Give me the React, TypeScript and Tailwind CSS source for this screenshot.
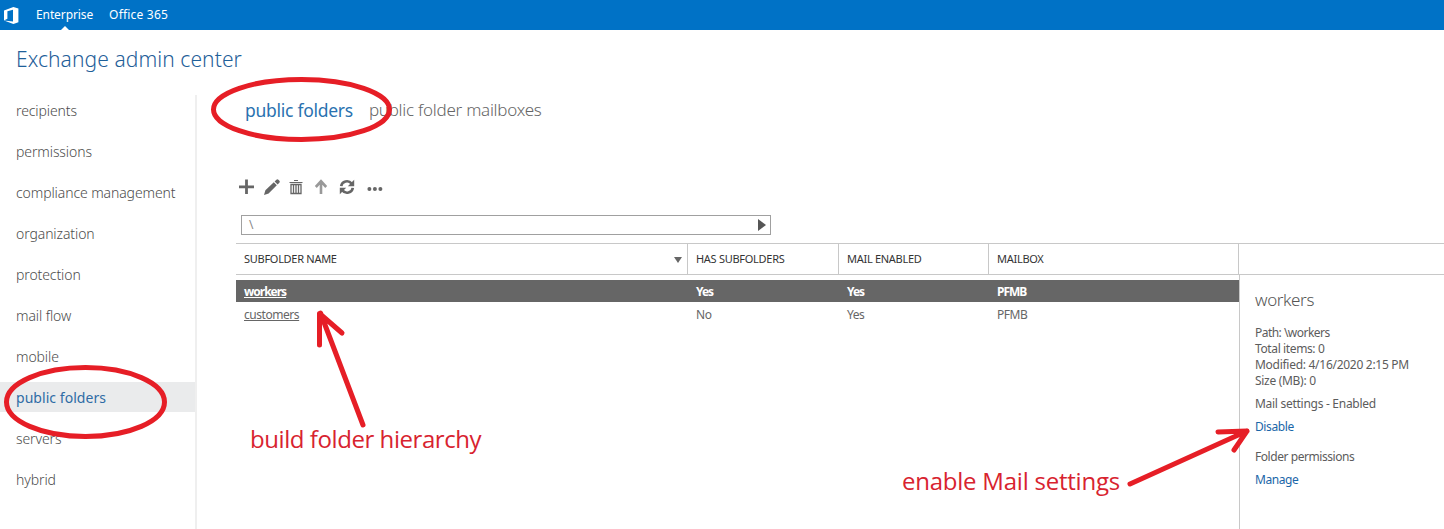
import React from "react";

const navItems = [
  "recipients",
  "permissions",
  "compliance management",
  "organization",
  "protection",
  "mail flow",
  "mobile",
  "public folders",
  "servers",
  "hybrid",
];

const rows = [
  { name: "workers", sub: "Yes", mail: "Yes", mailbox: "PFMB", selected: true },
  { name: "customers", sub: "No", mail: "Yes", mailbox: "PFMB", selected: false },
];

const columns = "grid grid-cols-[452px_151px_150px_1fr]";

function TopBar() {
  return (
    <header className="flex h-[30px] bg-[#0072c6] text-[12px] leading-[30px] text-white">
      <svg className="mt-[7px] ml-[4px] h-[17px] w-[15px]" viewBox="0 0 15 17" fill="#fff">
        <path fillRule="evenodd" d="M0 3.6 9.4 0 14.4 1.5V15.2L9.4 17 0 13.4 9 14.4V2.8L3.4 4.2V11.8L0 13.4Z" />
      </svg>
      <div className="ml-[17px] flex flex-col items-center">
        <span className="h-[26px] leading-[29px] tracking-[-0.1px]">Enterprise</span>
        <svg className="h-[4px] w-[8px]" viewBox="0 0 8 4" fill="#fff">
          <path d="M4 0 8 4H0Z" />
        </svg>
      </div>
      <span className="ml-[16px] leading-[29px] tracking-[0.2px]">Office 365</span>
    </header>
  );
}

function Sidebar() {
  return (
    <nav className="flex w-[197px] shrink-0 flex-col gap-[11px] border-r-2 border-[#efefef]">
      {navItems.map((item) => (
        <a
          key={item}
          className={
            item === "public folders"
              ? "h-[30px] bg-[#eaebec] pl-[16px] text-[14px] leading-[31px] tracking-[0.05px] text-[#2f6ba5]"
              : "h-[30px] pl-[16px] text-[14px] leading-[31px] font-light tracking-[-0.1px] text-[#4c4c4c]"
          }
        >
          {item}
        </a>
      ))}
    </nav>
  );
}

function Toolbar() {
  return (
    <div className="flex h-[20px] items-center text-[#666]">
      <svg className="h-[16px] w-[16px]" viewBox="0 0 16 16" fill="currentColor">
        <path d="M6.1 .5H8.9V6.4H15V9.2H8.9V15H6.1V9.2H0V6.4H6.1Z" />
      </svg>
      <svg className="ml-[9px] h-[16px] w-[16px]" viewBox="0 0 16 16" fill="currentColor">
        <path d="M0 16 1.4 11.2 9.8 3.2 12.8 6.2 4.6 14.4ZM10.6 2.4 12.4.7Q13.4-.2 14.4.7L15.4 1.8Q16.2 2.7 15.3 3.7L13.6 5.4Z" />
      </svg>
      <svg className="ml-[9px] h-[16px] w-[14px]" viewBox="0 0 14 16" fill="none" stroke="currentColor">
        <path d="M5 1.5H9M.5 3.5H13.5" />
        <path d="M2 5.5H12V14.5H2ZM4.5 6V14M7 6V14M9.5 6V14" strokeWidth="1.3" />
      </svg>
      <svg className="ml-[11px] h-[16px] w-[14px] text-[#999]" viewBox="0 0 14 16" fill="none" stroke="currentColor" strokeWidth="2.6">
        <path d="M7 15V2.5M1.8 8 7 2.3 12.2 8" />
      </svg>
      <svg className="ml-[11px] h-[16px] w-[16px]" viewBox="0 0 16 16" fill="none" stroke="currentColor" strokeWidth="2.6">
        <path d="M2.2 7.2C2.8 2.2 9.5 .6 12.6 4.6M13.8 8.8C13.2 13.8 6.5 15.4 3.4 11.4" />
        <path d="M15.2 .8V7.2H8.8ZM.8 15.2V8.8H7.2Z" fill="currentColor" stroke="none" />
      </svg>
      <svg className="mt-[4px] ml-[12px] h-[4px] w-[16px]" viewBox="0 0 16 4" fill="currentColor">
        <circle cx="2.4" cy="2" r="2" />
        <circle cx="7.9" cy="2" r="2" />
        <circle cx="13.4" cy="2" r="2" />
      </svg>
    </div>
  );
}

function FolderTable() {
  return (
    <section className="w-[1003px] shrink-0">
      <div className={`${columns} h-[32px] border-y border-[#c8c8c8] text-[11px] leading-[30px] tracking-[-0.28px] text-[#333]`}>
        <div className="flex items-center justify-between border-r border-[#c8c8c8] pr-[5px] pl-[8px]">
          SUBFOLDER NAME
          <svg className="mt-[2px] h-[6px] w-[8px]" viewBox="0 0 8 6" fill="#666">
            <path d="M0 0H8L4 6Z" />
          </svg>
        </div>
        <div className="border-r border-[#c8c8c8] pl-[8px]">HAS SUBFOLDERS</div>
        <div className="border-r border-[#c8c8c8] pl-[8px]">MAIL ENABLED</div>
        <div className="border-r border-[#c8c8c8] pl-[8px]">MAILBOX</div>
      </div>
      <div className="pt-[5px]">
        {rows.map((r) => (
          <div
            key={r.name}
            className={
              r.selected
                ? `${columns} h-[22px] bg-[#666] text-[12px] leading-[24px] font-bold tracking-[-1px] text-white`
                : `${columns} h-[24px] text-[12px] leading-[25px] tracking-[-0.45px] text-[#666]`
            }
          >
            <span className="pl-[8px] underline underline-offset-1">{r.name}</span>
            <span className="pl-[8px]">{r.sub}</span>
            <span className="pl-[8px]">{r.mail}</span>
            <span className="pl-[8px]">{r.mailbox}</span>
          </div>
        ))}
      </div>
    </section>
  );
}

function Details() {
  return (
    <aside className="flex grow flex-col">
      <div className="h-[32px] border-y border-[#c8c8c8]" />
      <div className="grow border-l border-[#c8c8c8] pl-[15px] text-[12px] leading-[16px] tracking-[-0.28px] text-[#5c5c5c]">
        <h2 className="pt-[13px] text-[17px] leading-[24px] font-light tracking-[-0.38px] text-[#555]">workers</h2>
        <div className="mt-[13px]">
          <p className="tracking-[-0.53px]">Path: \workers</p>
          <p className="tracking-[-0.38px]">Total items: 0</p>
          <p>Modified: 4/16/2020 2:15 PM</p>
          <p className="tracking-[-0.3px]">Size (MB): 0</p>
        </div>
        <p className="mt-[7px]">Mail settings - Enabled</p>
        <a className="mt-[7px] block tracking-[-0.4px] text-[#1a66a8]">Disable</a>
        <p className="mt-[14px] tracking-[-0.44px]">Folder permissions</p>
        <a className="mt-[7px] block tracking-[-0.45px] text-[#1a66a8]">Manage</a>
      </div>
    </aside>
  );
}

function Annotations() {
  return (
    <div className="pointer-events-none absolute inset-0">
      <svg className="h-[529px] w-[1444px]" viewBox="0 0 1444 529" fill="none" stroke="#e61e26" strokeWidth="5" strokeLinecap="round" strokeLinejoin="round">
        <ellipse cx="301.5" cy="109.5" rx="88" ry="30" />
        <ellipse cx="85.5" cy="402" rx="79" ry="34.5" />
        <path d="M363 425 320.5 313M319.5 345V313.5L342 333" />
        <path d="M1130 484 1247 431M1218 432 1247 431 1234 450" />
      </svg>
      <p className="absolute top-[423px] left-[250px] font-['Open_Sans',sans-serif] text-[24px] leading-[32px] tracking-[-0.43px] whitespace-nowrap text-[#d8232f]">build folder hierarchy</p>
      <p className="absolute top-[465px] left-[902px] font-['Open_Sans',sans-serif] text-[24px] leading-[32px] tracking-[-0.23px] whitespace-nowrap text-[#d8232f]">enable Mail settings</p>
    </div>
  );
}

export default function App() {
  return (
    <div className="relative flex h-[529px] w-[1444px] flex-col overflow-hidden bg-white font-['Noto_Sans',sans-serif]">
      <TopBar />
      <h1 className="h-[65px] pl-[16px] text-[21px] leading-[59px] font-light tracking-[0.08px] text-[#1f6099]">
        Exchange admin center
      </h1>
      <div className="flex grow">
        <Sidebar />
        <main className="flex grow flex-col pl-[39px]">
          <div className="flex gap-[16px] pl-[9px] leading-[30px]">
            <span className="text-[17.5px] tracking-[-0.27px] text-[#2a72b0]">public folders</span>
            <span className="text-[17px] font-light tracking-[-0.26px] text-[#666]">public folder mailboxes</span>
          </div>
          <div className="mt-[52px] pl-[3px]">
            <Toolbar />
          </div>
          <div className="mt-[18px] ml-[5px] flex h-[20px] w-[530px] items-center justify-between border border-[#a0a0a0] pr-[4px] pl-[7px] text-[12px] text-[#888]">
            {"\\"}
            <svg className="h-[12px] w-[8px]" viewBox="0 0 8 12" fill="#555">
              <path d="M0 0 8 6 0 12Z" />
            </svg>
          </div>
          <div className="mt-[8px] flex grow">
            <FolderTable />
            <Details />
          </div>
        </main>
      </div>
      <Annotations />
    </div>
  );
}
